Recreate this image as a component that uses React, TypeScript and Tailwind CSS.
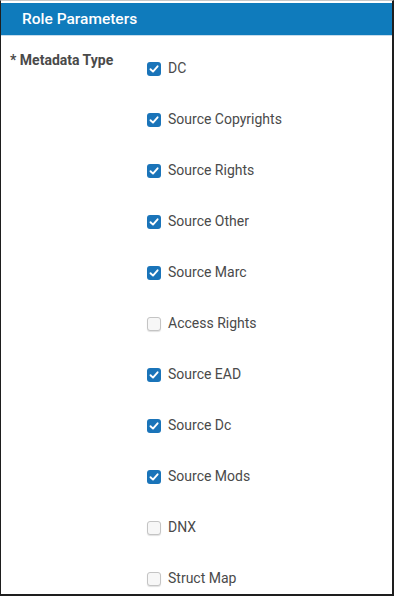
import React from "react";

const items: { label: string; checked: boolean }[] = [
  { label: "DC", checked: true },
  { label: "Source Copyrights", checked: true },
  { label: "Source Rights", checked: true },
  { label: "Source Other", checked: true },
  { label: "Source Marc", checked: true },
  { label: "Access Rights", checked: false },
  { label: "Source EAD", checked: true },
  { label: "Source Dc", checked: true },
  { label: "Source Mods", checked: true },
  { label: "DNX", checked: false },
  { label: "Struct Map", checked: false },
];

const Box: React.FC<{ checked: boolean }> = ({ checked }) =>
  checked ? (
    <span className="w-[14px] h-[14px] shrink-0 rounded-[3px] bg-[#1a74b9] flex items-center justify-center">
      <svg width="10" height="10" viewBox="0 0 10 10">
        <path d="M1.5 5.2 L4 7.6 L8.6 2.3" fill="none" stroke="white" strokeWidth="1.9" strokeLinecap="round" strokeLinejoin="round" />
      </svg>
    </span>
  ) : (
    <span className="w-[14px] h-[14px] shrink-0 rounded-[3px] bg-[#f7f7f7] border border-[#c4c4c4] shadow-[0_1px_1px_rgba(0,0,0,0.12)]" />
  );

export default function App() {
  return (
    <div
      className="w-[394px] h-[596px] overflow-hidden bg-white border-l border-r-2 border-b-2 border-[#1e1e1e] border-t border-t-[#c8c8c8] flex flex-col"
      style={{ fontFamily: "Roboto, 'Liberation Sans', sans-serif" }}
    >
      <div className="h-[2px] shrink-0 bg-white" />
      <div className="h-[32px] shrink-0 bg-[#0f7bbc] flex items-center pl-[21px] pt-px text-white text-[15.5px] font-medium">
        Role Parameters
      </div>
      <div className="h-px shrink-0 bg-[#c6dcec]" />
      <div className="flex shrink-0 pl-[9px]">
        <div className="w-[137px] pt-[16px] text-[14px] leading-4 text-[#4a4a4a] font-bold">
          * Metadata Type
        </div>
        <div className="flex flex-col pt-[7px]">
          {items.map((it) => (
            <div key={it.label} className="h-[51px] shrink-0 flex items-center gap-[7px]">
              <Box checked={it.checked} />
              <span className="text-[14px] text-[#4a4a4a]">{it.label}</span>
            </div>
          ))}
        </div>
      </div>
    </div>
  );
}
